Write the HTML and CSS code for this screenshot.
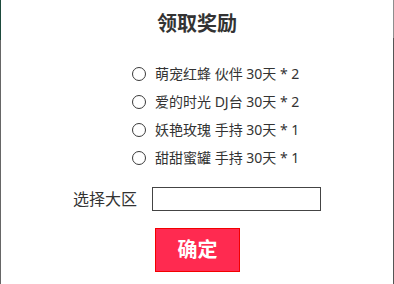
FILE: index.html
```html
<!DOCTYPE html>
<html lang="zh-CN">
<head>
<meta charset="utf-8">
<title>领取奖励</title>
<link rel="stylesheet" href="styles.css">
</head>
<body>
<div class="dialog">
  <h2 class="title">领取奖励</h2>
  <ul class="options">
    <li class="option"><span class="radio"></span><span class="label">萌宠红蜂 伙伴 30天 * 2</span></li>
    <li class="option"><span class="radio"></span><span class="label">爱的时光 DJ台 30天 * 2</span></li>
    <li class="option"><span class="radio"></span><span class="label">妖艳玫瑰 手持 30天 * 1</span></li>
    <li class="option"><span class="radio"></span><span class="label">甜甜蜜罐 手持 30天 * 1</span></li>
  </ul>
  <div class="field">
    <span class="field-label">选择大区</span>
    <input class="field-input" type="text">
  </div>
  <div class="actions">
    <button class="confirm" type="button">确定</button>
  </div>
</div>
</body>
</html>
```
FILE: styles.css
```css
html, body {
  margin: 0;
  padding: 0;
  background: #fff;
}
body {
  font-family: "Noto Sans", "Noto Sans CJK SC", sans-serif;
  color: #333;
}
.dialog {
  box-sizing: border-box;
  height: 284px;
  width: 394px;
  background:
    linear-gradient(to bottom, #1d4a3c 0, #1d4a3c 40px, #666 40px) left top / 1px 100% no-repeat,
    linear-gradient(to bottom, #8e8e8e 0, #8e8e8e 38px, #555 38px) right top / 1px 100% no-repeat,
    #fff;
  padding: 14px 1px 0;
  display: flex;
  flex-direction: column;
}
.title {
  margin: 0;
  font-size: 20px;
  line-height: 20px;
  font-weight: bold;
  text-align: center;
  color: #333;
}
.options {
  list-style: none;
  margin: 26px 0 0;
  padding: 0 0 0 131px;
  display: flex;
  flex-direction: column;
}
.option {
  height: 28px;
  display: flex;
  align-items: center;
  gap: 9px;
  font-size: 14px;
  line-height: 28px;
}
.radio {
  box-sizing: border-box;
  width: 14px;
  height: 14px;
  border: 1.5px solid #3a3a3a;
  border-radius: 50%;
  flex: none;
}
.field {
  margin-top: 15px;
  display: flex;
  align-items: center;
  justify-content: center;
  gap: 15px;
}
.field-label {
  font-size: 16px;
  line-height: 24px;
}
.field-input {
  box-sizing: border-box;
  width: 169px;
  height: 24px;
  margin: 0;
  border: 1px solid #444;
  border-radius: 0;
  padding: 0 4px;
  background: #fff;
  outline: none;
}
.actions {
  margin-top: 17px;
  display: flex;
  justify-content: center;
}
.confirm {
  box-sizing: border-box;
  width: 85px;
  height: 44px;
  margin: 0 0 0 1px;
  padding: 0;
  border: 1px solid #f30000;
  border-radius: 0;
  background: #ff2a50;
  color: #fff;
  font-family: "Noto Sans", "Noto Sans CJK SC", sans-serif;
  font-size: 20px;
  font-weight: bold;
  line-height: 42px;
}
```
